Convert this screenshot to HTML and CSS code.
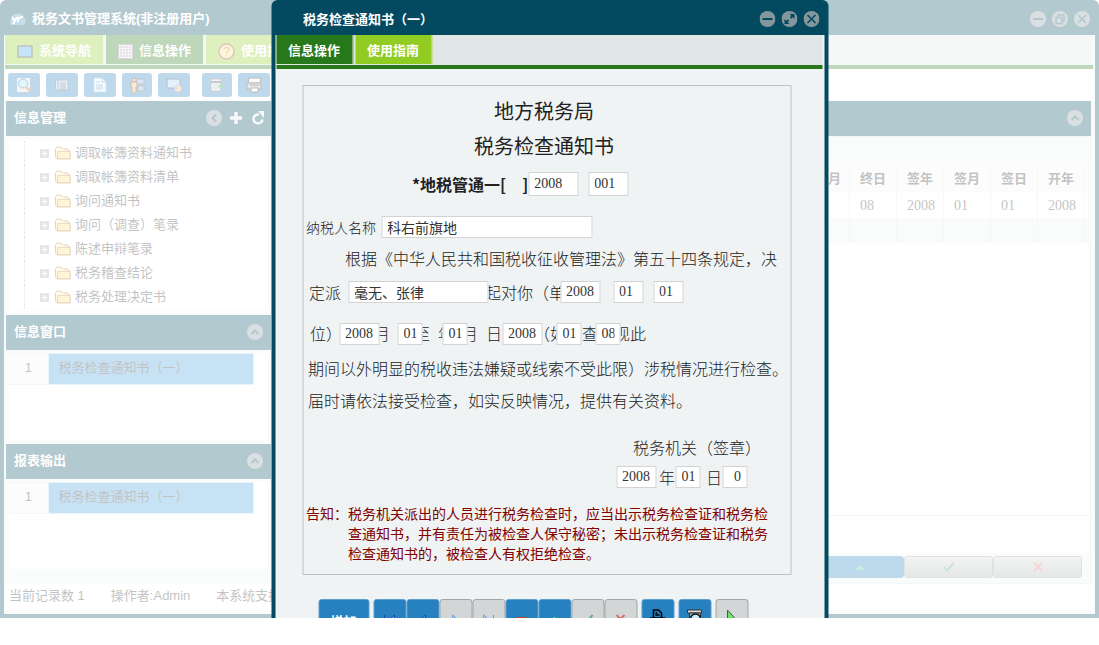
FILE: index.html
```html
<!DOCTYPE html>
<html lang="zh-CN">
<head>
    <meta charset="UTF-8">
    <meta name="viewport" content="width=device-width, initial-scale=1.0">
    <title>税务文书管理系统</title>
    <link rel="stylesheet" href="styles.css">
</head>
<body>
    <svg class="defs" width="0" height="0" aria-hidden="true">
        <symbol id="i-min" viewBox="0 0 16 16"><circle cx="8" cy="8" r="8" fill="#84979d"/><path d="M3 8h10" stroke="#034a61" stroke-width="2"/></symbol>
        <symbol id="i-max" viewBox="0 0 16 16"><circle cx="8" cy="8" r="8" fill="#84979d"/><path d="M8 3h5v5zM3 8v5h5z" fill="#034a61"/><path d="M11 5L9 7M7 9l-2 2" stroke="#034a61" stroke-width="2"/></symbol>
        <symbol id="i-restore" viewBox="0 0 16 16"><circle cx="8" cy="8" r="8" fill="#84979d"/><path d="M6 6V4h6v6h-2M4 6.500h6v6H4z" fill="none" stroke="#034a61" stroke-width="1.500"/></symbol>
        <symbol id="i-close" viewBox="0 0 16 16"><circle cx="8" cy="8" r="8" fill="#84979d"/><path d="M4 4l8 8M12 4l-8 8" stroke="#034a61" stroke-width="1.600"/></symbol>
        <symbol id="i-up" viewBox="0 0 16 16"><circle cx="8" cy="8" r="8" fill="#84979d"/><path d="M4.500 10L8 6.500l3.500 3.500" fill="none" stroke="#034a61" stroke-width="2"/></symbol>
        <symbol id="i-left" viewBox="0 0 16 16"><circle cx="8" cy="8" r="8" fill="#84979d"/><path d="M10 4.500L6.500 8l3.500 3.500" fill="none" stroke="#034a61" stroke-width="2"/></symbol>
        <symbol id="i-folder" viewBox="0 0 16 14"><path d="M.5 11V2.500L2 1h4l1.500 2H13v2h2v8H2z" fill="#fff3a8" stroke="#a8782a"/><path d="M2.500 12.500V5.500H15v7z" fill="#fbe27a" stroke="#b9832f"/></symbol>
        <symbol id="i-check" viewBox="0 0 12 10"><path d="M1 5l3 3.500L11 1" fill="none" stroke="#4fa466" stroke-width="2"/></symbol>
        <symbol id="i-cross" viewBox="0 0 10 10"><path d="M1 1l8 8M9 1L1 9" stroke="#e2756b" stroke-width="2"/></symbol>
    </svg>

    <div class="desktop">
        <div class="window">
            <header class="titlebar">
                <svg class="logo" width="16" height="14" viewBox="0 0 16 14"><path d="M3 13a3 3 0 0 1-1-6 4 4 0 0 1 5-5 5 5 0 0 1 7 4 4 4 0 0 1-1 7z" fill="#3f8fb5"/><path d="M2 5l3 5M7 5l-4 7M8 10V5M8 7l3-2h2" fill="none" stroke="#fff" stroke-width="2"/></svg>
                <h1>税务文书管理系统(非注册用户)</h1>
                <div class="controls">
                    <button type="button" aria-label="最小化"><svg><use href="#i-min"/></svg></button>
                    <button type="button" aria-label="还原"><svg><use href="#i-restore"/></svg></button>
                    <button type="button" aria-label="关闭"><svg><use href="#i-close"/></svg></button>
                </div>
            </header>
            <div class="window-body">
                <nav class="tabs">
                    <button type="button"><svg width="16" height="13" viewBox="0 0 16 13"><path d="M1 1h14v11H1z" fill="#3fa3e6" stroke="#333" stroke-width="1.500"/></svg>系统导航</button>
                    <button type="button" class="active"><svg width="15" height="15" viewBox="0 0 15 15"><path d="M.5.5h14v14H.5z" fill="#fff"/><path d="M0 3h15M0 6h15M0 9h15M0 12h15M3 0v15M6 0v15M9 0v15M12 0v15M.5.5h14v14H.5z" fill="none" stroke="#7a6c8c" stroke-width=".7"/></svg>信息操作</button>
                    <button type="button"><svg width="17" height="17" viewBox="0 0 17 17"><circle cx="8.500" cy="8.500" r="7.500" fill="#ffe28a" stroke="#8a4a2a" stroke-width="1.500"/><path d="M6 6.500c0-3 5-3 5 0 0 2-2.500 2-2.500 4M8.500 12v1.500" fill="none" stroke="#c98324" stroke-width="1.500"/></svg>使用指南</button>
                </nav>
                <div class="toolbar">
                    <button type="button" aria-label="查询"><svg viewBox="0 0 16 16"><path d="M1 1h13v14H1z" fill="#ddd"/><circle cx="7" cy="6.500" r="4.500" fill="#9be0ff" stroke="#155a8c"/><path d="M10 10l4 4" stroke="#d0632c" stroke-width="2.500"/></svg></button>
                    <button type="button" aria-label="列表"><svg viewBox="0 0 16 16"><path d="M1.500 3h12.500v10H1.500z" fill="#a7cfe8" stroke="#456"/><path d="M4 3v10M6 6h6M6 8h6M6 10h6M6 12h6" stroke="#345" fill="none"/></svg></button>
                    <button type="button" aria-label="文书"><svg viewBox="0 0 16 16"><path d="M2 1h8l4 4v10H2z" fill="#e4f4ff" stroke="#5fa8dd"/><path d="M10 1v4h4M4 5h4M4 8h7M4 10h7M4 12h7" fill="none" stroke="#3b80bc"/></svg></button>
                    <button type="button" class="narrow" aria-label="用户"><svg viewBox="0 0 16 16"><circle cx="5" cy="3" r="2" fill="#e8b376" stroke="#5a361a"/><path d="M2 5h6v5H7v6H3v-6H2z" fill="#f1ba63" stroke="#5a361a"/><path d="M8 2h7v5H8zM9 9h6v5H9z" fill="#9aa8e8" stroke="#444"/></svg></button>
                    <button type="button" class="last" aria-label="设置"><svg viewBox="0 0 16 16"><path d="M1 2h13v9H1z" fill="#9cd2f2" stroke="#123"/><circle cx="12" cy="11.500" r="3.500" fill="#f2cb57" stroke="#a963bd"/><circle cx="11" cy="11" r="1.500" fill="#63bf82"/></svg></button>
                    <button type="button" class="narrow" aria-label="导出"><svg viewBox="0 0 16 16"><path d="M2 2h10v12H2z" fill="#d6e3e6" stroke="#667"/><path d="M2 5h10" stroke="#445" stroke-width="2"/><path d="M4 8h5M4 11h5" stroke="#889"/><path d="M12 6v7M9 9.500h6" stroke="#27943e" stroke-width="2"/></svg></button>
                    <button type="button" aria-label="打印"><svg viewBox="0 0 16 16"><path d="M3 1h12l-1 5H2z" fill="#eee" stroke="#222"/><path d="M1 6h14v6H1z" fill="#aaa" stroke="#222"/><path d="M4 8h9M5 11h7v4H5z" fill="#fff" stroke="#222"/></svg></button>
                </div>

                <div class="columns">
                    <aside class="sidebar">
                        <section class="panel">
                            <header class="panel-head tools">
                                <h2>信息管理</h2>
                                <button type="button" aria-label="收起"><svg><use href="#i-left"/></svg></button>
                                <button type="button" aria-label="添加"><svg viewBox="0 0 16 16"><path d="M8 2v12M2 8h12" stroke="#dfe8ea" stroke-width="3.500"/></svg></button>
                                <button type="button" aria-label="刷新"><svg viewBox="0 0 16 16"><path d="M12.500 9.500A4.500 4.500 0 1 1 9 4.500" fill="none" stroke="#dfe8ea" stroke-width="2.500"/><path d="M8 1h6v7z" fill="#dfe8ea"/></svg></button>
                            </header>
                            <div class="panel-body">
                                <ul class="tree">
                                    <li><i></i><svg><use href="#i-folder"/></svg><a href="#">调取帐簿资料通知书</a></li>
                                    <li><i></i><svg><use href="#i-folder"/></svg><a href="#">调取帐簿资料清单</a></li>
                                    <li><i></i><svg><use href="#i-folder"/></svg><a href="#">询问通知书</a></li>
                                    <li><i></i><svg><use href="#i-folder"/></svg><a href="#">询问（调查）笔录</a></li>
                                    <li><i></i><svg><use href="#i-folder"/></svg><a href="#">陈述申辩笔录</a></li>
                                    <li><i></i><svg><use href="#i-folder"/></svg><a href="#">税务稽查结论</a></li>
                                    <li><i></i><svg><use href="#i-folder"/></svg><a href="#">税务处理决定书</a></li>
                                </ul>
                            </div>
                        </section>
                        <section class="panel">
                            <header class="panel-head">
                                <h2>信息窗口</h2>
                                <button type="button" aria-label="收起"><svg><use href="#i-up"/></svg></button>
                            </header>
                            <div class="panel-body">
                                <div class="list">
                                    <table>
                                        <tr><th scope="row">1</th><td>税务检查通知书（一）</td></tr>
                                    </table>
                                </div>
                            </div>
                        </section>
                        <section class="panel">
                            <header class="panel-head">
                                <h2>报表输出</h2>
                                <button type="button" aria-label="收起"><svg><use href="#i-up"/></svg></button>
                            </header>
                            <div class="panel-body">
                                <div class="list">
                                    <table>
                                        <tr><th scope="row">1</th><td>税务检查通知书（一）</td></tr>
                                    </table>
                                </div>
                            </div>
                        </section>
                    </aside>

                    <main class="panel records">
                        <header class="panel-head">
                            <h2></h2>
                            <button type="button" aria-label="收起"><svg><use href="#i-up"/></svg></button>
                        </header>
                        <div class="records-body">
                            <div class="grid">
                                <table>
                                    <colgroup><col><col class="c"><col class="c"><col class="c"><col class="c"><col class="c"><col class="end"></colgroup>
                                    <thead>
                                        <tr><th class="first">月</th><th>终日</th><th>签年</th><th>签月</th><th>签日</th><th>开年</th><th></th></tr>
                                    </thead>
                                    <tbody>
                                        <tr><td></td><td>08</td><td>2008</td><td>01</td><td>01</td><td>2008</td><td></td></tr>
                                        <tr><td></td><td></td><td></td><td></td><td></td><td></td><td></td></tr>
                                    </tbody>
                                </table>
                            </div>
                            <div class="grid-foot"></div>
                            <div class="grid-buttons">
                                <button type="button" class="blue" aria-label="编辑"><svg width="10" height="5" viewBox="0 0 10 5"><path d="M0 5l5-5 5 5z" fill="#33c9a5"/></svg></button>
                                <button type="button" aria-label="保存"><svg width="12" height="10"><use href="#i-check"/></svg></button>
                                <button type="button" aria-label="取消"><svg width="10" height="10"><use href="#i-cross"/></svg></button>
                            </div>
                        </div>
                    </main>
                </div>

                <footer class="statusbar">
                    <span>当前记录数 1</span>
                    <span>操作者:Admin</span>
                    <span>本系统支持</span>
                </footer>
            </div>
        </div>

        <div class="mask"></div>

        <div class="window dialog" role="dialog" aria-labelledby="dialogTitle">
            <header class="titlebar">
                <h1 id="dialogTitle">税务检查通知书（一）</h1>
                <div class="controls">
                    <button type="button" aria-label="最小化"><svg><use href="#i-min"/></svg></button>
                    <button type="button" aria-label="最大化"><svg><use href="#i-max"/></svg></button>
                    <button type="button" aria-label="关闭"><svg><use href="#i-close"/></svg></button>
                </div>
            </header>
            <div class="window-body">
                <nav class="tabs">
                    <button type="button" class="active">信息操作</button>
                    <button type="button">使用指南</button>
                </nav>
                <form class="dialog-form">
                    <div class="paper">
                        <h2>地方税务局</h2>
                        <h2>税务检查通知书</h2>
                        <div class="number">
                            <strong>*地税管通一[&emsp;]</strong>
                            <input class="w-50" type="text" value="2008" aria-label="文号年份">
                            <input class="w-40" type="text" value="001" aria-label="文号">
                        </div>
                        <div class="taxpayer">
                            <label for="taxpayer">纳税人名称</label>
                            <input id="taxpayer" type="text" value="科右前旗地">
                        </div>
                        <p class="indent">根据《中华人民共和国税收征收管理法》第五十四条规定，决</p>
                        <div class="line">
                            定派　　　　　　　　　起对你（单
                            <input class="officers" type="text" value="毫无、张律" aria-label="检查人员">
                            <input class="start-year w-40" type="text" value="2008" aria-label="起始年">
                            <input class="start-month w-30" type="text" value="01" aria-label="起始月">
                            <input class="start-day w-30" type="text" value="01" aria-label="起始日">
                        </div>
                        <div class="line period">
                            位）&ensp;年&ensp;月&ensp;日至&ensp;年&ensp;月&ensp;日&ensp;&ensp;&ensp;&ensp;（如检查发现此
                            <input class="from-year w-40" type="text" value="2008" aria-label="自年">
                            <input class="from-month w-25" type="text" value="01" aria-label="自月">
                            <input class="from-day w-25" type="text" value="01" aria-label="自日">
                            <input class="to-year w-40" type="text" value="2008" aria-label="至年">
                            <input class="to-month w-25" type="text" value="01" aria-label="至月">
                            <input class="to-day w-25" type="text" value="08" aria-label="至日">
                        </div>
                        <p>期间以外明显的税收违法嫌疑或线索不受此限）涉税情况进行检查。</p>
                        <p>届时请依法接受检查，如实反映情况，提供有关资料。</p>
                        <div class="sign">
                            <p>税务机关（签章）</p>
                            <div class="sign-date">
                                <input class="w-40" type="text" value="2008" aria-label="签发年">
                                <span>年</span>
                                <input class="w-25" type="text" value="01" aria-label="签发月">
                                <span class="day">日</span>
                                <input class="w-25 right" type="text" value="0" aria-label="签发日">
                            </div>
                        </div>
                        <div class="notice">
                            <span>告知：</span>
                            <div>税务机关派出的人员进行税务检查时，应当出示税务检查证和税务检<br>查通知书，并有责任为被检查人保守秘密；未出示税务检查证和税务<br>检查通知书的，被检查人有权拒绝检查。</div>
                        </div>
                    </div>
                    <div class="actions">
                        <div><button type="button" class="add">增加</button></div>
                        <div>
                            <button type="button" aria-label="首条"><svg viewBox="0 0 14 14"><path d="M2 1v12M12 1v12L5 7z" fill="#4aa5ff" stroke="#1548a8"/></svg></button>
                            <button type="button" aria-label="上一条"><svg viewBox="0 0 14 14"><path d="M10 1v12L3 7z" fill="#4aa5ff" stroke="#1548a8"/></svg></button>
                            <button type="button" class="off" aria-label="下一条"><svg viewBox="0 0 14 14"><path d="M4 1v12l7-6z" fill="#a8cdf0" stroke="#6c9ce0"/></svg></button>
                            <button type="button" class="off" aria-label="末条"><svg viewBox="0 0 14 14"><path d="M12 1v12M2 1v12l7-6z" fill="#a8cdf0" stroke="#6c9ce0"/></svg></button>
                            <button type="button" aria-label="删除"><svg viewBox="0 0 14 14"><path d="M2 3h10v4H2z" fill="#c5402a"/></svg></button>
                            <button type="button" aria-label="编辑"><svg viewBox="0 0 14 14"><path d="M2 7l5-5 5 5z" fill="#55e0c4" stroke="#0c7f8c"/></svg></button>
                            <button type="button" class="off" aria-label="保存"><svg viewBox="0 0 14 14"><path d="M1 7l3 4 8-10" fill="none" stroke="#5fa878" stroke-width="2"/></svg></button>
                            <button type="button" class="off" aria-label="取消"><svg viewBox="0 0 14 14"><path d="M3 1l8 8M11 1L3 9" stroke="#d4706b" stroke-width="2"/></svg></button>
                        </div>
                        <div><button type="button" aria-label="打印"><svg class="tall" viewBox="0 0 18 24"><path d="M5 9V1h5l3 3v5M2 9h14v9H2zM7 4h2M7 6h4M4 13h10" fill="none" stroke="#000" stroke-width="1.500"/></svg></button></div>
                        <div><button type="button" aria-label="预览"><svg class="tall" viewBox="0 0 18 24"><path d="M2 1h14v3H2z" fill="#ddd" stroke="#333"/><path d="M4 4h11v16H4z" fill="#aaa" stroke="#333"/><circle cx="10" cy="10" r="5" fill="#c3efff" stroke="#111" stroke-width="1.500"/></svg></button></div>
                        <div><button type="button" class="off" aria-label="执行"><svg class="tall" viewBox="0 0 18 24"><path d="M5 1v20l9-10z" fill="#69e564" stroke="#555"/></svg></button></div>
                    </div>
                </form>
            </div>
        </div>
    </div>
</body>
</html>
```
FILE: styles.css
```css
* {
    box-sizing: border-box;
}
body {
    margin: 0;
    background: #fff;
    font: 13px/20px "Liberation Sans", "Noto Sans CJK SC", sans-serif;
    color: #333;
}
h1, h2, p, ul {
    margin: 0;
    padding: 0;
}
button {
    padding: 0;
    border: 0;
    background: none;
    font: inherit;
    cursor: pointer;
}
.defs {
    position: absolute;
}
.desktop {
    position: relative;
    height: calc(100vh - 27px);
    overflow: hidden;
}
.mask {
    position: absolute;
    inset: 0;
    background: rgba(255,255,255,0.7);
}

/* windows */
.window {
    display: flex;
    flex-direction: column;
    height: 100%;
    padding: 0 4px 4px;
    background: #034a61;
    border-radius: 6px 6px 0 0;
}
.titlebar {
    display: flex;
    align-items: center;
    height: 35px;
    padding: 2px 5px 0 6px;
}
.titlebar h1 {
    flex: 1;
    font-size: 13px;
    color: #fff;
}
.logo {
    margin-right: 6px;
}
.controls {
    display: flex;
    gap: 6px;
}
.controls button,
.controls svg,
.panel-head button,
.panel-head svg {
    display: block;
    width: 16px;
    height: 16px;
}
.window-body {
    flex: 1;
    display: flex;
    flex-direction: column;
    min-height: 0;
    padding: 0 2px 4px 1px;
    background: #eff3f4;
}
.tabs {
    display: flex;
    gap: 2px;
    height: 34px;
    background: #e0e5e5;
    border-bottom: 4px solid #27781b;
}
.tabs button {
    display: flex;
    align-items: center;
    gap: 6px;
    height: 29px;
    padding: 3px 12px 0;
    border-right: 1px solid #d5e6c4;
    background: #90cc22;
    color: #fff;
    font-weight: bold;
}
.tabs .active {
    background: #27781b;
}
.toolbar {
    display: flex;
    gap: 6px;
    height: 32px;
    padding: 4px 3px;
    background: #fff;
}
.toolbar button {
    display: flex;
    align-items: center;
    justify-content: center;
    width: 32px;
    height: 24px;
    border-radius: 3px;
    background: #2780bf;
}
.toolbar .narrow {
    width: 30px;
}
.toolbar .last {
    margin-right: 6px;
}
.toolbar svg {
    width: 16px;
    height: 16px;
}

/* panels */
.columns {
    flex: 1;
    display: grid;
    grid-template-columns: 265px 1fr;
    gap: 6px;
    min-height: 0;
    padding: 0 2px 0 1px;
}
.sidebar {
    display: flex;
    flex-direction: column;
}
.panel {
    display: flex;
    flex-direction: column;
}
.panel-head {
    display: flex;
    align-items: center;
    gap: 6px;
    height: 35px;
    padding: 0 8px 1px;
    background: #034a61;
}
.panel-head.tools {
    padding-right: 5px;
}
.panel-head h2 {
    flex: 1;
    font-size: 13px;
    color: #fff;
}
.panel-body {
    padding: 3px 3px 4px;
}
.tree {
    height: 172px;
    padding-top: 2px;
    background: #fff;
    list-style: none;
}
.tree li {
    display: flex;
    align-items: center;
    height: 24px;
    margin-left: 15px;
    padding-left: 15px;
    border-left: 1px dotted #999;
}
.tree i {
    width: 9px;
    height: 9px;
    margin-right: 6px;
    background:
        linear-gradient(#fff, #fff) center / 5px 1px no-repeat,
        linear-gradient(#fff, #fff) center / 1px 5px no-repeat,
        #aaa;
}
.tree svg {
    width: 16px;
    height: 14px;
    margin-right: 4px;
}
.tree a {
    color: #333;
    text-decoration: none;
}
.list {
    height: 87px;
    background: #fff;
}
.list table,
.grid table {
    border-collapse: collapse;
}
.list th {
    width: 39px;
    height: 31px;
    padding: 0 0 2px;
    border: solid #d0e4f3;
    border-width: 1px 0;
    background: #f3f3f3;
    font-weight: normal;
}
.list td {
    width: 205px;
    padding: 0 10px 2px;
    border: 1px solid #b5dcf5;
    background: #489ede;
}
.records-body {
    flex: 1;
    display: flex;
    flex-direction: column;
    padding: 27px 1px 5px 0;
    border: solid #d9e3e6;
    border-width: 1px 1px 1px 0;
}
.grid {
    flex: 1;
    background: #fff;
    border-bottom: 1px solid #ddd;
}
.grid table {
    width: 100%;
    table-layout: fixed;
}
.grid .c {
    width: 47px;
}
.grid .end {
    width: 4px;
}
.grid th,
.grid td {
    height: 25px;
    padding: 0 0 0 10px;
    border-right: 1px solid #e5e5e5;
    font-family: "Liberation Serif", "Noto Sans CJK SC", serif;
    font-size: 14px;
    text-align: left;
}
.grid th {
    height: 29px;
    background: #f3f3f3;
    font-size: 13px;
}
.grid .first {
    padding-right: 8px;
    text-align: right;
}
.grid tr:nth-child(2) td {
    background: #eff3f4;
}
.grid-foot {
    height: 37px;
    background: #fff;
}
.grid-buttons {
    display: flex;
    justify-content: flex-end;
    padding: 3px 7px 0 0;
}
.grid-buttons button {
    display: flex;
    align-items: center;
    justify-content: center;
    width: 89px;
    height: 22px;
    border: 1px solid #999;
    border-radius: 3px;
    background: linear-gradient(#d3d8d8, #a9adad);
}
.grid-buttons .blue {
    border-color: #2780bf;
    background: #2780bf;
}
.statusbar {
    display: flex;
    gap: 26px;
    height: 26px;
    padding: 2px 4px;
    background: #fff;
}

/* notice dialog */
.dialog {
    position: absolute;
    top: 0;
    left: 50%;
    width: 557px;
    padding-bottom: 0;
    transform: translateX(-50%);
}
.dialog .titlebar {
    padding-left: 28px;
}
.dialog .titlebar h1 {
    font-family: "Noto Sans CJK SC", sans-serif;
}
.dialog .tabs {
    flex: none;
}
.dialog .window-body {
    overflow: hidden;
}
.dialog-form {
    padding: 16px 31px 0 26px;
    font-family: "Noto Sans CJK SC", sans-serif;
}
.paper {
    height: 490px;
    padding: 7px 2px 0 3px;
    border: 1px solid #bcc1c2;
    color: #222;
    font-size: 16px;
    font-weight: 300;
    line-height: 32px;
    white-space: nowrap;
}
.paper h2 {
    margin-left: -6px;
    font-size: 20px;
    font-weight: normal;
    line-height: 35px;
    text-align: center;
}
.paper input {
    height: 22px;
    padding: 0 5px;
    border: 1px solid #d3d3d3;
    border-radius: 0;
    background: #fff;
    color: #333;
    font: 14px "Liberation Serif", "Noto Sans CJK SC", serif;
}
.paper .w-50 { width: 50px; }
.paper .w-40 { width: 40px; }
.paper .w-30 { width: 30px; }
.paper .w-25 { width: 25px; }
.paper .right { text-align: right; }
.paper p {
    padding-left: 2px;
}
.paper .indent {
    padding-left: 39px;
}
.number {
    display: flex;
    align-items: center;
    padding-left: 106px;
    height: 42px;
}
.number strong {
    font-weight: bold;
}
.number input {
    height: 24px;
}
.number input + input {
    margin-left: 10px;
}
.taxpayer {
    display: flex;
    align-items: center;
    gap: 5px;
    height: 24px;
    margin: 10px 0 3px;
}
.taxpayer label {
    font-size: 14px;
}
.taxpayer input {
    width: 211px;
}

/* the boxes lie over the printed text of the notice */
.line {
    position: relative;
    height: 34px;
    padding: 2px 3px 0;
}
.line input {
    position: absolute;
    top: 7px;
}
.officers { left: 42px; width: 140px; }
.start-year { left: 254px; }
.start-month { left: 307px; }
.start-day { left: 347px; }
.period {
    height: 44px;
    padding: 9px 4px 0;
}
.period input {
    top: 15px;
}
.from-year { left: 33px; }
.from-month { left: 91px; }
.from-day { left: 136px; }
.to-year { left: 196px; }
.to-month { left: 250px; }
.to-day { left: 289px; }
.sign {
    width: 160px;
    margin: 15px 0 12px 310px;
}
.sign p {
    padding-left: 17px;
}
.sign-date {
    display: flex;
    align-items: center;
    height: 28px;
}
.sign-date span {
    width: 19px;
    padding-left: 3px;
}
.sign-date .day {
    width: 22px;
    padding-left: 6px;
}
.notice {
    display: flex;
    color: #800000;
    font-size: 14px;
    font-weight: normal;
    line-height: 20px;
}
.actions {
    display: flex;
    gap: 4px;
    padding: 24px 0 0 16px;
}
.actions div {
    display: flex;
}
.actions button {
    display: flex;
    align-items: center;
    justify-content: center;
    width: 33px;
    height: 44px;
    border: 1px solid #5a9fd0;
    border-radius: 3px;
    background: #2780bf;
    color: #fff;
    font-weight: bold;
}
.actions .add {
    width: 51px;
}
.actions .off {
    border-color: #a3a6a6;
    background: #d2d6d6;
}
.actions svg {
    width: 14px;
    height: 14px;
}
.actions .tall {
    width: 18px;
    height: 24px;
}
```
